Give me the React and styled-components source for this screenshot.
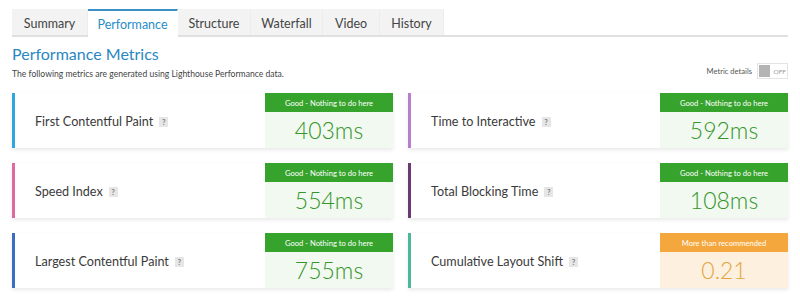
import styled, { createGlobalStyle } from "styled-components";

const GlobalStyle = createGlobalStyle`
  body {
    margin: 0;
    background: #fff;
    font-family: Lato, "Open Sans", sans-serif;
  }
`;

const Page = styled.div`
  width: 800px;
  height: 299px;
  padding: 9px 12px 0;
  box-sizing: border-box;
  overflow: hidden;
`;

const TabBar = styled.div`
  display: flex;
  border-bottom: 2px solid #e0e0e0;
  height: 26px;
`;

const Tab = styled.div`
  display: flex;
  align-items: center;
  justify-content: center;
  width: ${(p) => p.w}px;
  box-sizing: border-box;
  font-size: 12.5px;
  color: ${(p) => (p.active ? "#2a8cc8" : "#444")};
  background: ${(p) => (p.active ? "#fff" : "#f3f3f3")};
  border-top: 2px solid ${(p) => (p.active ? "#3990c9" : "#f3f3f3")};
  border-right: 1px solid ${(p) => (p.active ? "#fff" : "#ececec")};
  margin-bottom: ${(p) => (p.active ? "-2px" : "0")};
  height: ${(p) => (p.active ? "28px" : "26px")};
`;

const Header = styled.div`
  display: flex;
  justify-content: space-between;
  align-items: flex-end;
  margin-top: 6px;
`;

const Title = styled.h1`
  margin: 0;
  font-size: 16px;
  font-weight: 400;
  color: #2a87c2;
  line-height: 22px;
`;

const Subtitle = styled.p`
  margin: 3px 0 0;
  font-size: 8.6px;
  color: #444;
  line-height: 12px;
`;

const ToggleWrap = styled.div`
  display: flex;
  align-items: center;
  gap: 5px;
  font-size: 7.6px;
  color: #555;
  margin-bottom: 1px;
`;

const Toggle = styled.div`
  display: flex;
  align-items: center;
  gap: 3px;
  width: 31px;
  height: 16px;
  box-sizing: border-box;
  border: 1px solid #e4e4e4;
  padding: 1px;
  font-size: 6.5px;
  color: #999;
`;

const Knob = styled.div`
  width: 13px;
  height: 12px;
  background: #b4b4b4;
`;

const Grid = styled.div`
  display: grid;
  grid-template-columns: 381px 380px;
  column-gap: 15px;
  row-gap: 15px;
  margin-top: 13px;
`;

const Card = styled.div`
  display: flex;
  height: 55px;
  border-left: 3px solid ${(p) => p.color};
  background: #fff;
  box-shadow: 0 2px 4px rgba(0, 0, 0, 0.09);
`;

const Label = styled.div`
  flex: 1;
  display: flex;
  align-items: center;
  padding-left: 20px;
  padding-top: 2px;
  font-size: 12.6px;
  color: #3a3a3a;
`;

const Help = styled.span`
  display: inline-flex;
  align-items: center;
  justify-content: center;
  width: 9px;
  height: 10px;
  margin-left: 6px;
  background: #e6e6e6;
  color: #777;
  font-size: 7px;
  font-weight: 700;
`;

const Status = styled.div`
  width: 128px;
  display: flex;
  flex-direction: column;
  background: ${(p) => (p.warn ? "#fdf0de" : "#f2f9f0")};
`;

const StatusHead = styled.div`
  height: 19px;
  display: flex;
  align-items: center;
  justify-content: center;
  background: ${(p) => (p.warn ? "#f4a73c" : "#36a32c")};
  color: #fff;
  font-size: 7.6px;
`;

const Value = styled.div`
  flex: 1;
  display: flex;
  align-items: center;
  justify-content: center;
  font-size: 23px;
  font-weight: 300;
  color: ${(p) => (p.warn ? "#e4a443" : "#33952a")};
  padding-bottom: 1px;
`;

const tabs = [
  ["Summary", 76],
  ["Performance", 90],
  ["Structure", 73],
  ["Waterfall", 72],
  ["Video", 57],
  ["History", 64],
];

const metrics = [
  ["First Contentful Paint", "403ms", "#2ea6df"],
  ["Time to Interactive", "592ms", "#b57fce"],
  ["Speed Index", "554ms", "#df6aa2"],
  ["Total Blocking Time", "108ms", "#6a3b72"],
  ["Largest Contentful Paint", "755ms", "#3b6dc3"],
  ["Cumulative Layout Shift", "0.21", "#4bb899", true],
];

export default function App() {
  return (
    <Page>
      <GlobalStyle />
      <TabBar>
        {tabs.map(([t, w]) => (
          <Tab key={t} w={w} active={t === "Performance"}>
            {t}
          </Tab>
        ))}
      </TabBar>
      <Header>
        <div>
          <Title>Performance Metrics</Title>
          <Subtitle>
            The following metrics are generated using Lighthouse Performance data.
          </Subtitle>
        </div>
        <ToggleWrap>
          Metric details
          <Toggle>
            <Knob />
            OFF
          </Toggle>
        </ToggleWrap>
      </Header>
      <Grid>
        {metrics.map(([name, val, color, warn]) => (
          <Card key={name} color={color}>
            <Label>
              {name}
              <Help>?</Help>
            </Label>
            <Status warn={warn}>
              <StatusHead warn={warn}>
                {warn ? "More than recommended" : "Good - Nothing to do here"}
              </StatusHead>
              <Value warn={warn}>{val}</Value>
            </Status>
          </Card>
        ))}
      </Grid>
    </Page>
  );
}
